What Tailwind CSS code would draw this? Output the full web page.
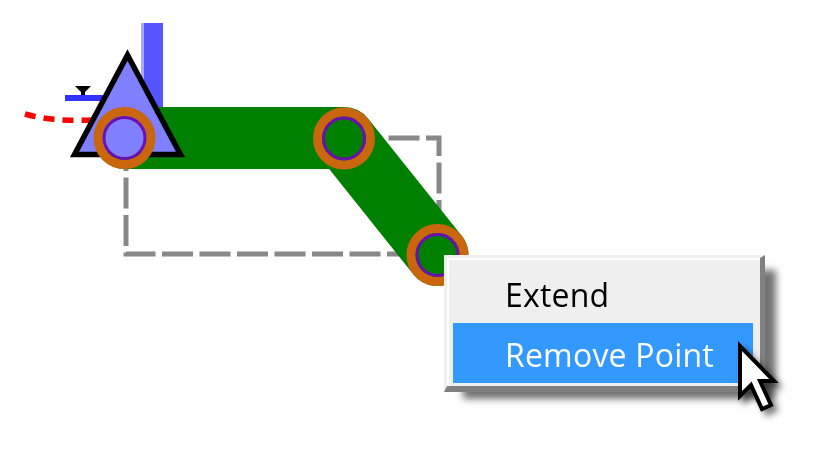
<!DOCTYPE html>
<html lang="en">
<head>
    <meta charset="UTF-8">
    <title>Remove Point</title>
    <script src="https://cdn.jsdelivr.net/npm/@tailwindcss/browser@4"></script>
</head>
<body class="bg-white">
    <div class="relative w-[834px] h-[463px] overflow-hidden bg-white">
        <!-- sketch canvas -->
        <svg class="absolute left-0 top-0 blur-[0.6px]" width="834" height="463" viewBox="0 0 834 463" fill="none">
            <rect x="141" y="23" width="22" height="90" fill="#5555ff"/>
            <rect x="141" y="23" width="3" height="90" fill="#aaaaff"/>
            <rect x="126" y="138" width="313" height="116" stroke="#888888" stroke-width="5" stroke-dasharray="31 6.500"/>
            <path d="M25 114 C45 120 70 121 92 120" stroke="#ff0000" stroke-width="5.500" stroke-dasharray="11 8"/>
            <rect x="65" y="95" width="40" height="6" fill="#3333ff"/>
            <path d="M75 86 H91 L85 92 V95 H81 V92 Z" fill="#000000"/>
            <path d="M125 138 H344 L437.5 255" stroke="#008000" stroke-width="62" stroke-linejoin="round" stroke-linecap="round"/>
            <path d="M127.500 55 L74.500 154.500 H180.500 Z" fill="#8080ff" stroke="#000000" stroke-width="5.500" stroke-linejoin="miter"/>
            <circle cx="124.500" cy="138" r="26.500" stroke="#c9660e" stroke-width="9"/>
            <circle cx="124.500" cy="138" r="20.500" fill="#8080ff" stroke="#6a10b0" stroke-width="3"/>
            <circle cx="344" cy="138.500" r="26.500" stroke="#c9660e" stroke-width="9"/>
            <circle cx="344" cy="138.500" r="20.500" fill="#008000" stroke="#6a10b0" stroke-width="3"/>
            <circle cx="437.500" cy="255" r="26.500" stroke="#c9660e" stroke-width="9"/>
            <circle cx="437.500" cy="255" r="20.500" fill="#008000" stroke="#6a10b0" stroke-width="3"/>
        </svg>

        <!-- context menu -->
        <div class="absolute left-[444px] top-[255px] w-[321px] h-[137px] bg-[#efefef] border-t-[3px] border-l-[3px] border-r-[5px] border-b-[6px] border-t-[#f0f0f0] border-l-[#f0f0f0] border-r-[#808080] border-b-[#808080] shadow-[inset_2px_2px_0_#ffffff,15px_11px_7px_-4px_rgba(0,0,0,0.55)] pt-[5px] pl-[6px] pr-[7px] pb-[3px] flex flex-col blur-[0.5px] font-['Open_Sans',sans-serif] text-[32px] tracking-[0.2px] leading-none">
            <div class="h-[60px] pl-[52px] pt-[4px] flex items-center text-black">Extend</div>
            <div class="h-[60px] pl-[52px] pt-[4px] flex items-center bg-[#3399ff] text-white">Remove Point</div>
        </div>

        <!-- cursor -->
        <svg class="absolute left-0 top-0 blur-[0.4px] drop-shadow-[5px_5px_3px_rgba(0,0,0,0.5)]" width="834" height="463" viewBox="0 0 834 463" fill="none">
            <path d="M740 346 V396 L751 385 L762 409 L771 405 L760 381 L774 381 Z" fill="#ffffff" stroke="#000000" stroke-width="4" stroke-linejoin="miter"/>
        </svg>
    </div>
</body>
</html>
